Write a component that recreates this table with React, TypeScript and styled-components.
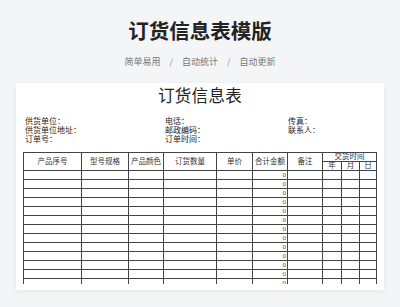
import React from 'react';
import styled, { createGlobalStyle } from 'styled-components';

const GlobalStyle = createGlobalStyle`
  body {
    margin: 0;
    background-color: #f4f5f7;
    font-family: "Noto Sans CJK SC", "Noto Sans", sans-serif;
  }
`;

const Page = styled.div`
  width: 400px;
  height: 307px;
  overflow: hidden;
  display: flex;
  flex-direction: column;
  align-items: center;
`;

const Heading = styled.h1`
  margin: 19px 0 0;
  font-size: 20.5px;
  line-height: 22px;
  font-weight: 700;
  color: #222;
`;

const Tags = styled.div`
  margin-top: 15px;
  display: flex;
  align-items: center;
  gap: 9px;
  font-size: 9px;
  line-height: 12px;
  color: #777;
`;

const Slash = styled.span`
  color: #999;
`;

const Sheet = styled.div`
  margin-top: 15px;
  width: 368px;
  height: 207px;
  box-sizing: border-box;
  padding: 5px 7px 6px;
  background-color: #fff;
  box-shadow: 0 2px 6px rgba(0, 0, 0, 0.06);
  font-family: "Liberation Serif", "Noto Sans CJK SC", serif;
  color: #222;
`;

const SheetTitle = styled.div`
  text-align: center;
  font-size: 16.5px;
  line-height: 18px;
  letter-spacing: 0.3px;
`;

const Info = styled.div`
  margin-top: 11px;
  padding-left: 2px;
  display: grid;
  grid-template-columns: 140px 123px 1fr;
  grid-auto-rows: 9px;
  font-size: 8px;
  line-height: 9px;
`;

const TableBox = styled.div`
  margin-top: 8px;
  width: 354px;
  height: 132px;
  overflow: hidden;
`;

const Grid = styled.table`
  border-collapse: collapse;
  table-layout: fixed;
  width: 353px;
  font-size: 7.5px;
  color: #333;
`;

const Head = styled.th`
  border: 1px solid #444;
  font-weight: 400;
  padding: 0;
  height: 8px;
  line-height: 8px;
  text-align: center;
  white-space: nowrap;
  overflow: hidden;
`;

const Cell = styled.td<{ $num?: boolean }>`
  border: 1px solid #444;
  padding: 0 1px 0 0;
  height: 8px;
  line-height: 8px;
  text-align: ${p => (p.$num ? 'right' : 'left')};
  font-size: 7px;
  color: #555;
`;

const widths = [58, 47, 35, 53, 36, 35, 35, 19, 18, 17];
const rows = Array.from({ length: 13 }, (_, i) => i);

const App = () => (
  <Page>
    <GlobalStyle />
    <Heading>订货信息表模版</Heading>
    <Tags>
      <span>简单易用</span>
      <Slash>/</Slash>
      <span>自动统计</span>
      <Slash>/</Slash>
      <span>自动更新</span>
    </Tags>
    <Sheet>
      <SheetTitle>订货信息表</SheetTitle>
      <Info>
        <span>供货单位：</span>
        <span>电话：</span>
        <span>传真：</span>
        <span>供货单位地址：</span>
        <span>邮政编码：</span>
        <span>联系人：</span>
        <span>订单号：</span>
        <span>订单时间：</span>
        <span />
      </Info>
      <TableBox>
        <Grid>
          <colgroup>
            {widths.map((w, i) => (
              <col key={i} style={{ width: w }} />
            ))}
          </colgroup>
          <thead>
            <tr>
              <Head rowSpan={2}>产品序号</Head>
              <Head rowSpan={2}>型号规格</Head>
              <Head rowSpan={2}>产品颜色</Head>
              <Head rowSpan={2}>订货数量</Head>
              <Head rowSpan={2}>单价</Head>
              <Head rowSpan={2}>合计金额</Head>
              <Head rowSpan={2}>备注</Head>
              <Head colSpan={3}>交货时间</Head>
            </tr>
            <tr>
              <Head>年</Head>
              <Head>月</Head>
              <Head>日</Head>
            </tr>
          </thead>
          <tbody>
            {rows.map(r => (
              <tr key={r}>
                <Cell />
                <Cell />
                <Cell />
                <Cell />
                <Cell />
                <Cell $num>0</Cell>
                <Cell />
                <Cell />
                <Cell />
                <Cell />
              </tr>
            ))}
          </tbody>
        </Grid>
      </TableBox>
    </Sheet>
  </Page>
);

export default App;
